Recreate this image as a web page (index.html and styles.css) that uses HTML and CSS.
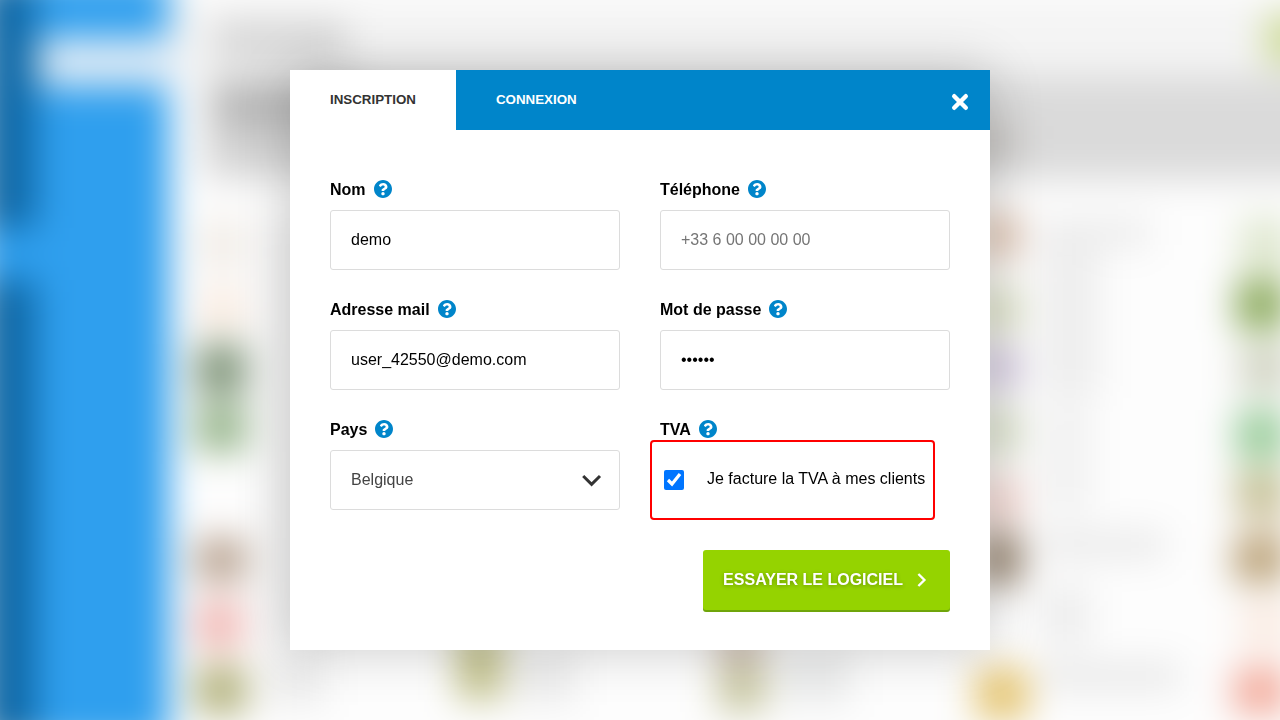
FILE: index.html
```html
<!DOCTYPE html>
<html lang="fr">

<head>
    <meta charset="UTF-8">
    <meta name="viewport" content="width=device-width, initial-scale=1.0">
    <title>Inscription</title>
    <link rel="stylesheet" href="styles.css">
</head>

<body>
    <!-- Fond flou -->
    <svg class="fond" viewBox="0 0 1280 720" preserveAspectRatio="xMidYMid slice" aria-hidden="true">
        <defs>
            <filter id="flou" filterUnits="userSpaceOnUse" x="-80" y="-80" width="1440" height="880" color-interpolation-filters="sRGB">
                <feGaussianBlur stdDeviation="18" />
            </filter>
        </defs>
        <g filter="url(#flou)">
            <rect x="-80" y="-80" width="1440" height="880" fill="#fdfdfd" />
            <rect x="170" y="0" width="1190" height="75" fill="#f4f4f4" />
            <rect x="205" y="76" width="1155" height="104" fill="#dadada" />
            <!-- menu -->
            <rect x="-20" y="-24" width="189" height="768" fill="#2f9fee" />
            <rect x="-20" y="-24" width="56" height="252" fill="#0f68a6" />
            <rect x="-20" y="280" width="56" height="464" fill="#0f68a6" />
            <rect x="38" y="38" width="140" height="48" fill="#e0ecf6" />
            <!-- titres et textes -->
            <rect x="215" y="22" width="132" height="38" fill="#d5d5d5" />
            <rect x="215" y="85" width="150" height="40" fill="#b6b6b6" />
            <rect x="215" y="125" width="150" height="40" fill="#d2d2d2" />
            <rect x="960" y="125" width="60" height="35" fill="#c8c5c2" />
            <rect x="265" y="215" width="60" height="470" fill="#f1f1f1" />
            <rect x="1040" y="218" width="110" height="30" fill="#ececec" />
            <rect x="1040" y="248" width="60" height="150" fill="#eee" />
            <rect x="1040" y="405" width="50" height="110" fill="#f1f1f1" />
            <rect x="1040" y="532" width="125" height="26" fill="#e8e8e8" />
            <rect x="1040" y="585" width="50" height="60" fill="#ededed" />
            <rect x="1040" y="662" width="140" height="28" fill="#e8e8e8" />
            <rect x="265" y="665" width="60" height="40" fill="#ebebeb" />
            <rect x="515" y="650" width="60" height="55" fill="#ececec" />
            <rect x="780" y="650" width="70" height="55" fill="#eaebeb" />
            <g opacity="0.8">
                <!-- produits, colonne gauche -->
                <rect x="200" y="220" width="46" height="50" fill="#efe8e1" />
                <rect x="202" y="290" width="40" height="40" fill="#f7e2d2" />
                <rect x="196" y="344" width="50" height="52" fill="#5f7a57" />
                <rect x="196" y="406" width="50" height="46" fill="#7ba26d" />
                <rect x="196" y="538" width="50" height="44" fill="#a88c75" />
                <rect x="196" y="602" width="46" height="46" fill="#eda29e" />
                <rect x="196" y="666" width="50" height="48" fill="#9e9c58" />
                <!-- rangée du bas -->
                <rect x="457" y="626" width="46" height="74" fill="#b4b36e" />
                <rect x="718" y="626" width="44" height="34" fill="#c4aca0" />
                <rect x="718" y="662" width="48" height="50" fill="#bab98a" />
                <rect x="976" y="668" width="52" height="52" fill="#dfb74d" />
                <!-- produits, colonnes droites -->
                <rect x="978" y="214" width="42" height="44" fill="#d4b299" />
                <rect x="978" y="288" width="42" height="44" fill="#ccd2ac" />
                <rect x="978" y="348" width="42" height="40" fill="#bfb0d0" />
                <rect x="978" y="408" width="42" height="46" fill="#cad3b4" />
                <rect x="978" y="478" width="42" height="44" fill="#edc3ba" />
                <rect x="978" y="534" width="44" height="50" fill="#7a6348" />
                <rect x="1265" y="14" width="50" height="50" fill="#c5d584" />
                <rect x="1240" y="218" width="50" height="54" fill="#d7e2c3" />
                <rect x="1236" y="280" width="50" height="50" fill="#6b9430" />
                <rect x="1240" y="348" width="50" height="42" fill="#c0c4ad" />
                <rect x="1236" y="410" width="50" height="50" fill="#7dbf7f" />
                <rect x="1236" y="472" width="50" height="40" fill="#b2ab70" />
                <rect x="1240" y="510" width="50" height="25" fill="#e5dac6" />
                <rect x="1234" y="538" width="52" height="44" fill="#a78750" />
                <rect x="1240" y="600" width="50" height="50" fill="#fae7dc" />
                <rect x="1234" y="668" width="52" height="46" fill="#f09380" />
            </g>
        </g>
    </svg>

    <!-- Icônes -->
    <svg class="sprite" aria-hidden="true">
        <symbol id="icone-aide" viewBox="8 8 496 496">
            <path d="M504 256c0 136.997-111.043 248-248 248S8 392.997 8 256C8 119.083 119.043 8 256 8s248 111.083 248 248zM262.655 90c-54.497 0-89.255 22.957-116.549 63.758-3.536 5.286-2.353 12.415 2.715 16.258l34.699 26.31c5.205 3.947 12.621 3.008 16.665-2.122 17.864-22.658 30.113-35.797 57.303-35.797 20.429 0 45.698 13.148 45.698 32.958 0 14.976-12.363 22.667-32.534 33.976C247.128 238.528 216 254.941 216 296v4c0 6.627 5.373 12 12 12h56c6.627 0 12-5.373 12-12v-1.333c0-28.462 83.186-29.647 83.186-106.667 0-58.002-60.165-102-116.531-102zM256 338c-25.365 0-46 20.635-46 46 0 25.364 20.635 46 46 46s46-20.636 46-46c0-25.365-20.635-46-46-46z" />
        </symbol>
    </svg>

    <main class="modal">
        <header class="onglets">
            <button type="button" class="onglet actif">INSCRIPTION</button>
            <button type="button" class="onglet">CONNEXION</button>
            <button type="button" class="fermer" aria-label="Fermer">
                <svg width="20" height="20" viewBox="0 0 20 20">
                    <path d="M4.2 4.2l11.6 11.6M15.8 4.2L4.2 15.8" />
                </svg>
            </button>
        </header>

        <form class="formulaire">
            <div class="champs">
                <div class="champ">
                    <div class="titre">
                        <label for="nom">Nom</label>
                        <svg class="aide"><use href="#icone-aide" /></svg>
                    </div>
                    <input class="saisie" type="text" id="nom" value="demo">
                </div>

                <div class="champ">
                    <div class="titre">
                        <label for="telephone">Téléphone</label>
                        <svg class="aide"><use href="#icone-aide" /></svg>
                    </div>
                    <input class="saisie" type="tel" id="telephone" placeholder="+33 6 00 00 00 00">
                </div>

                <div class="champ">
                    <div class="titre">
                        <label for="mail">Adresse mail</label>
                        <svg class="aide"><use href="#icone-aide" /></svg>
                    </div>
                    <input class="saisie" type="email" id="mail" value="user_42550@demo.com">
                </div>

                <div class="champ">
                    <div class="titre">
                        <label for="passe">Mot de passe</label>
                        <svg class="aide"><use href="#icone-aide" /></svg>
                    </div>
                    <input class="saisie" type="password" id="passe" value="demo42">
                </div>

                <div class="champ">
                    <div class="titre">
                        <label for="pays">Pays</label>
                        <svg class="aide"><use href="#icone-aide" /></svg>
                    </div>
                    <div class="liste">
                        <select class="saisie" id="pays">
                            <option>France</option>
                            <option selected>Belgique</option>
                            <option>Suisse</option>
                        </select>
                        <svg class="fleche" viewBox="0 0 20 20">
                            <path d="M1.2 5l8.4 8.4L18 5" />
                        </svg>
                    </div>
                </div>

                <div class="champ">
                    <div class="titre">
                        <span>TVA</span>
                        <svg class="aide"><use href="#icone-aide" /></svg>
                    </div>
                    <div class="tva">
                        <input type="checkbox" id="tva" checked>
                        <label for="tva">Je facture la TVA à mes clients</label>
                    </div>
                </div>
            </div>

            <button type="button" class="valider">
                ESSAYER LE LOGICIEL
                <svg width="20" height="20" viewBox="0 0 20 20">
                    <path d="M8.4 4l6 6-6 6" />
                </svg>
            </button>
        </form>
    </main>
</body>

</html>
```
FILE: styles.css
```css
* {
    box-sizing: border-box;
}

body {
    margin: 0;
    min-height: 100vh;
    display: flex;
    align-items: center;
    justify-content: center;
    font-family: "Liberation Sans", Arial, sans-serif;
    font-size: 16px;
    color: #000;
}

button {
    font-family: inherit;
    font-weight: bold;
    border: 0;
    cursor: pointer;
}

.fond {
    position: fixed;
    inset: 0;
    width: 100%;
    height: 100%;
    z-index: -1;
}

.sprite {
    position: absolute;
    width: 0;
    height: 0;
}

.modal {
    width: 100%;
    max-width: 700px;
    background: #fff;
    box-shadow: 0 0 50px rgba(0, 0, 0, 0.2);
}

/* Onglets */
.onglets {
    display: flex;
    height: 60px;
    background: #0085ca;
}

.onglet {
    padding: 0 40px 2px;
    background: none;
    color: #fff;
}

.onglet.actif {
    background: #fff;
    color: #333;
}

.fermer {
    width: 60px;
    margin-left: auto;
    padding: 4px 0 0;
    background: none;
}

.fermer svg {
    display: block;
    margin: 0 auto;
    stroke: #fff;
    stroke-width: 4.4;
    stroke-linecap: round;
}

/* Formulaire */
.formulaire {
    display: flex;
    flex-direction: column;
    padding: 40px;
}

.champs {
    display: grid;
    grid-template-columns: 1fr 1fr;
    gap: 20px 40px;
    margin-bottom: 40px;
}

.titre {
    display: flex;
    align-items: center;
    gap: 8px;
    height: 40px;
    font-weight: bold;
}

.aide {
    width: 18px;
    height: 18px;
    margin-bottom: 2px;
    fill: #0085ca;
}

.saisie {
    display: block;
    width: 100%;
    height: 60px;
    padding: 0 20px;
    border: 1px solid #dcdcdc;
    border-radius: 3px;
    background: #fff;
    color: #000;
    font-family: inherit;
    font-size: 16px;
}

.liste {
    position: relative;
}

select.saisie {
    appearance: none;
    padding-bottom: 2px;
    color: #444;
}

.fleche {
    position: absolute;
    top: 21px;
    right: 18px;
    width: 20px;
    height: 20px;
    fill: none;
    stroke: #333;
    stroke-width: 3;
    pointer-events: none;
}

.tva {
    display: flex;
    align-items: center;
    gap: 23px;
    width: max-content;
    height: 80px;
    margin: -10px;
    padding: 0 8px 0 12px;
    border: 2px solid #f00;
    border-radius: 4px;
}

.tva input {
    width: 20px;
    height: 20px;
    margin: 0;
}

.tva label {
    padding-bottom: 2px;
}

.valider {
    display: flex;
    align-items: center;
    align-self: flex-end;
    gap: 7px;
    height: 60px;
    padding: 0 20px;
    border-radius: 3px;
    background: #95d300;
    box-shadow: 0 2px 0 #6fa50a;
    color: #fff;
    font-size: 16px;
    text-shadow: 0 1px 4px rgba(0, 0, 0, 0.3);
}

.valider svg {
    fill: none;
    stroke: #fff;
    stroke-width: 2.4;
}
```
